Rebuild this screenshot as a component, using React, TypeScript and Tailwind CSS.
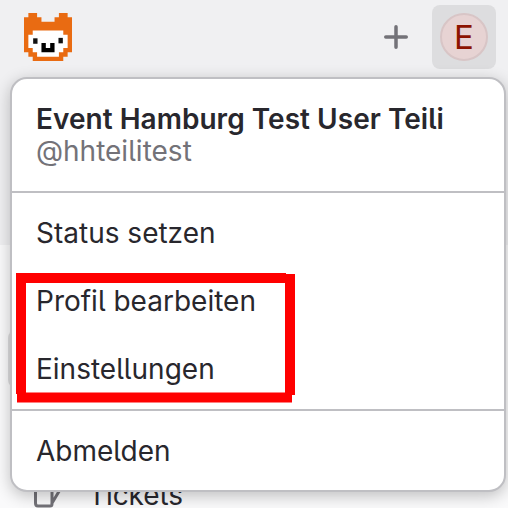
function Logo() {
  return (
    <svg className="h-12 w-12" viewBox="0 0 11 11">
      <path fill="#e96b12" d="M1 0H3V1H4V2H7V1H8V0H10V1H11V9H10V10H9V11H2V10H1V9H0V1H1Z" />
      <path fill="#fff" d="M2 4H9V5H10V8H9V9H8V10H3V9H2V8H1V5H2Z" />
      <path fill="#000" d="M4 6.900H5V8H6V6.900H7V9H4Z" />
      <rect x="2.1" y="5.8" width="1" height="1.25" fill="#111" />
      <rect x="7.9" y="5.7" width="1" height="1.25" fill="#111" />
    </svg>
  );
}

function Highlight() {
  return (
    <svg className="pointer-events-none absolute left-[16px] top-[273px]" width="280" height="130" fill="none" stroke="#f00" strokeWidth="10">
      <path d="M0 5H270M274 1V122M276 124.500H1M5 0V121" />
    </svg>
  );
}

export default function App() {
  return (
    <div className="relative flex h-[508px] w-[508px] flex-col overflow-hidden bg-[#fafafb] font-['Inter','Liberation_Sans',sans-serif] text-[28px] leading-8 text-[#28272d] [font-feature-settings:'cv05']">
      <header className="flex h-[245px] shrink-0 items-start bg-[#f0f0f2] pl-6 pr-3 pt-[5px]">
        <div className="mt-2"><Logo /></div>
        <svg className="ml-auto mt-5 h-6 w-6" viewBox="0 0 24 24" stroke="#737278" strokeWidth="3.500" strokeLinecap="round">
          <path d="M12 1.750V22.250M1.750 12H22.250" />
        </svg>
        <div className="ml-6 flex h-16 w-16 items-center justify-center rounded-lg bg-[#dddddf]">
          <div className="flex h-12 w-12 items-center justify-center rounded-full border-2 border-[#d8c5c6] bg-[#e7d3d3] text-[33px] text-[#8d1300]">E</div>
        </div>
      </header>
      <main className="flex grow flex-col justify-between pt-[85px]">
        <div className="ml-2 h-[58px] w-40 rounded-lg bg-[#dcdcde]" />
        <div className="flex h-[29px] items-start pl-[34px]">
          <svg className="h-7 w-7 overflow-visible" viewBox="0 0 28 28" fill="none" stroke="#737278" strokeWidth="3">
            <path d="M18 2H4Q1.500 2 1.500 5V24Q1.500 27 4 27H16Q18 27 18 25V8M17.500 25L27 9" />
          </svg>
          <span className="ml-[26px] tracking-[-0.1px]">Tickets</span>
        </div>
      </main>
      <section className="absolute left-[10px] top-[77px] flex h-[415px] w-[496px] flex-col rounded-[17px] border-2 border-[#bfbfc3] bg-white shadow-[0_4px_16px_rgba(5,5,6,0.24)]">
        <div className="h-[114px] border-b-2 border-[#bfbfc3] pl-6 pt-[24px]">
          <div className="whitespace-nowrap font-semibold tracking-[0.03px]">Event Hamburg Test User Teili</div>
          <div className="text-[#737278]">@hhteilitest</div>
        </div>
        <nav className="flex h-[218px] flex-col gap-9 border-b-2 border-[#bfbfc3] pl-6 pt-[24px]">
          <span>Status setzen</span>
          <span>Profil bearbeiten</span>
          <span>Einstellungen</span>
        </nav>
        <div className="pl-6 pt-[24px]">Abmelden</div>
      </section>
      <Highlight />
    </div>
  );
}
